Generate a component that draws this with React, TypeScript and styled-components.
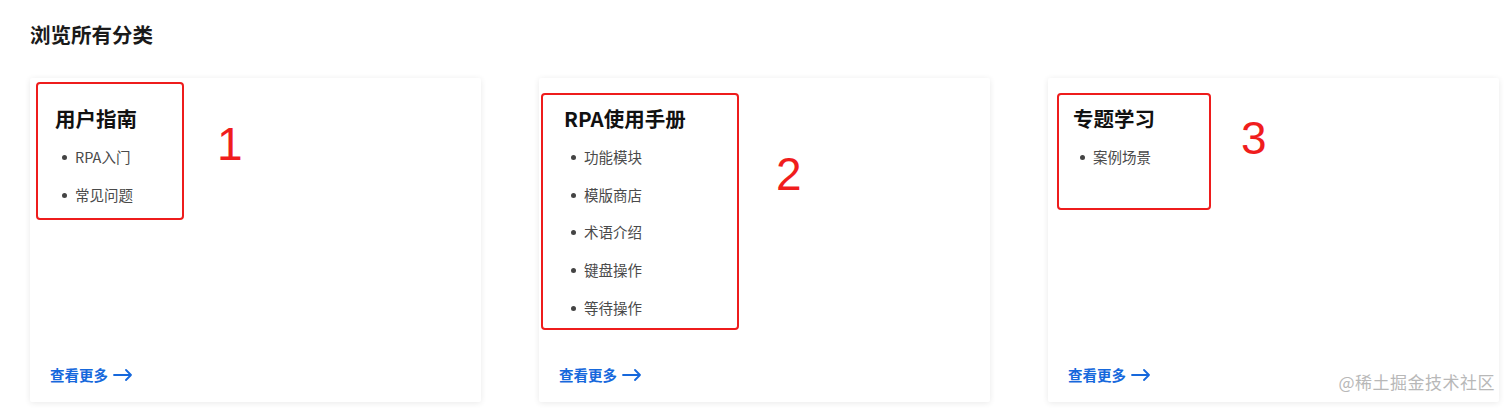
import styled, {createGlobalStyle} from "styled-components";

const GlobalStyle = createGlobalStyle`
  body {
    margin: 0;
    background: #ffffff;
    font-family: "Noto Sans CJK SC", "Noto Sans", sans-serif;
  }
`

type Category = {
    title: string;
    items: string[];
}

const categories: Category[] = [
    {title: "用户指南", items: ["RPA入门", "常见问题"]},
    {title: "RPA使用手册", items: ["功能模块", "模版商店", "术语介绍", "键盘操作", "等待操作"]},
    {title: "专题学习", items: ["案例场景"]},
]

// red annotation boxes drawn over the screenshot
const marks = [
    {box: {left: 36, top: 82, width: 148, height: 138}, num: "1", at: {left: 217, top: 118}},
    {box: {left: 541, top: 93, width: 198, height: 237}, num: "2", at: {left: 776, top: 148}},
    {box: {left: 1057, top: 93, width: 154, height: 117}, num: "3", at: {left: 1241, top: 112}},
]

const Arrow = () => (
    <svg width="20" height="12" viewBox="0 0 20 12" fill="none" stroke="currentColor"
         strokeWidth="1.8" strokeLinecap="round" strokeLinejoin="round">
        <path d="M1 6h17M13 1l5 5-5 5"/>
    </svg>
)

export default function App() {
    return (
        <StyledPage>
            <GlobalStyle/>
            <StyledHeading>浏览所有分类</StyledHeading>
            <StyledGrid>
                {categories.map(c => (
                    <StyledCard key={c.title}>
                        <StyledCardTitle>{c.title}</StyledCardTitle>
                        <StyledList>
                            {c.items.map(i => <StyledItem key={i}>{i}</StyledItem>)}
                        </StyledList>
                        <StyledMore href="#">
                            查看更多
                            <Arrow/>
                        </StyledMore>
                    </StyledCard>
                ))}
            </StyledGrid>
            {marks.map(m => (
                <div key={m.num}>
                    <StyledMarkBox style={m.box}/>
                    <StyledMarkNum style={m.at}>{m.num}</StyledMarkNum>
                </div>
            ))}
            <StyledWatermark>@稀土掘金技术社区</StyledWatermark>
        </StyledPage>
    )
}

const StyledPage = styled.div`
  position: relative;
  width: 1512px;
  height: 415px;
  padding: 21px 12px 0 30px;
  box-sizing: border-box;
  overflow: hidden;
`

const StyledHeading = styled.h2`
  margin: 0;
  font-size: 20.5px;
  line-height: 27px;
  font-weight: 700;
  color: #1a1a1a;
`

const StyledGrid = styled.div`
  margin-top: 30px;
  display: grid;
  grid-template-columns: repeat(3, 451px);
  column-gap: 58px;
`

const StyledCard = styled.div`
  height: 324px;
  box-sizing: border-box;
  padding: 26px 25px 16px 20px;
  background: #fff;
  border-radius: 2px;
  box-shadow: 0 1px 6px rgba(0, 0, 0, 0.09);
  display: flex;
  flex-direction: column;
`

const StyledCardTitle = styled.h3`
  margin: 0 0 0 5px;
  font-size: 20.5px;
  line-height: 28px;
  font-weight: 700;
  color: #111;
`

const StyledList = styled.ul`
  list-style: none;
  margin: 14px 0 0 0;
  padding: 0 0 0 25px;
  flex: 1;
`

const StyledItem = styled.li`
  position: relative;
  font-size: 14.5px;
  line-height: 22px;
  margin-bottom: 15.7px;
  color: #4a4a4a;

  &::before {
    content: "";
    position: absolute;
    left: -13px;
    top: 9px;
    width: 5px;
    height: 5px;
    border-radius: 50%;
    background: #444;
  }
`

const StyledMore = styled.a`
  display: inline-flex;
  align-items: center;
  gap: 5px;
  font-size: 14.5px;
  line-height: 22px;
  font-weight: 700;
  color: #1668dc;
  text-decoration: none;
`

const StyledMarkBox = styled.div`
  position: absolute;
  box-sizing: border-box;
  border: 2.5px solid #ee1c1c;
  border-radius: 4px;
`

const StyledMarkNum = styled.div`
  position: absolute;
  font-family: "Liberation Sans", Arial, sans-serif;
  font-size: 46px;
  line-height: 52px;
  color: #f01d1d;
`

const StyledWatermark = styled.div`
  position: absolute;
  right: 17px;
  bottom: 21px;
  font-size: 17px;
  line-height: 24px;
  color: #b8b8b8;
  letter-spacing: 0.5px;
`
